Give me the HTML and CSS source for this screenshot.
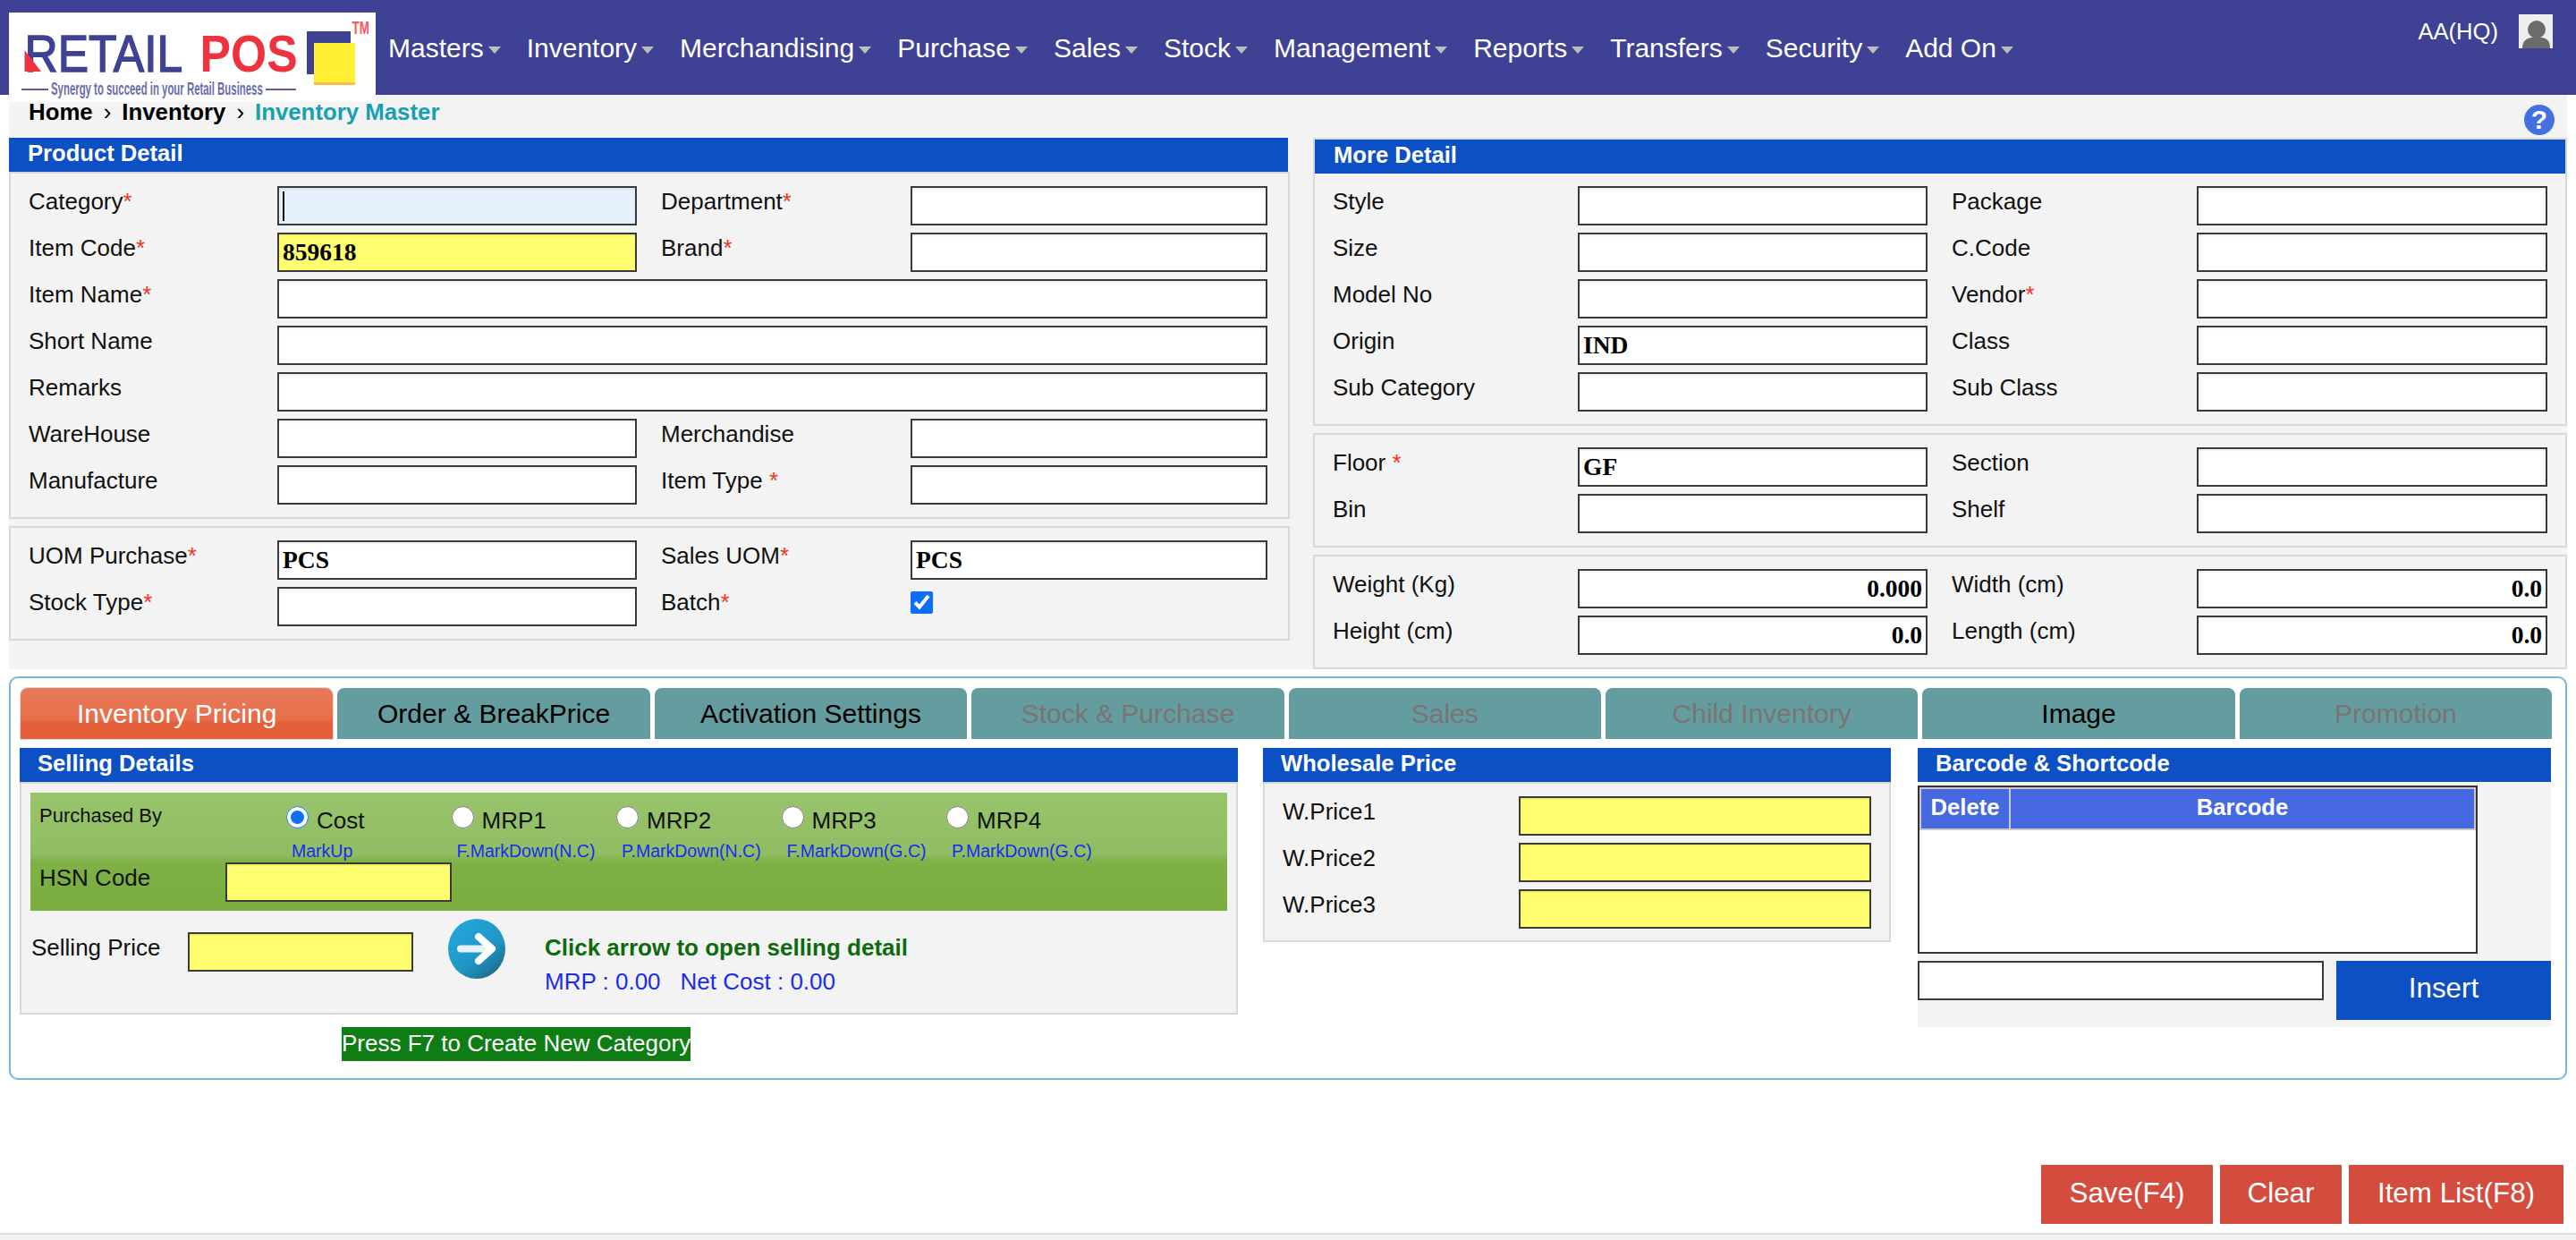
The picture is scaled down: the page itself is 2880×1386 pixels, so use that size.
FILE: index.html
```html
<!DOCTYPE html>
<html lang="en">
<head>
  <meta charset="UTF-8">
  <title>Inventory Master</title>
  <link rel="stylesheet" href="styles.css">
</head>
<body>
  <header class="topbar">
    <div class="logo">
      <svg viewBox="0 0 410 100" width="410" height="100">
        <text class="logo-word logo-word-thin" transform="translate(17.5 66) scale(0.889 1)" fill="#3f4294" stroke="#3f4294">RETAIL</text>
        <polygon points="17.5,42 36,66 17.5,66" fill="#ee3340"/>
        <text class="logo-word" transform="translate(213.6 66) scale(0.89 1)" fill="#ee3340">POS</text>
        <rect x="333" y="21" width="49" height="48" fill="#3f4294"/>
        <rect x="341" y="34" width="46" height="47" fill="#fdb94a"/>
        <rect x="341" y="34" width="46" height="44" fill="#fff033"/>
        <text class="logo-tm" transform="translate(383.5 24) scale(0.675 1)" fill="#ef5a64">TM</text>
        <line x1="14" y1="86" x2="44" y2="86" stroke="#5b5da5" stroke-width="2"/>
        <text class="logo-tag" transform="translate(47 92) scale(0.57 1)" fill="#6a6cac">Synergy to succeed in your Retail Business</text>
        <line x1="287" y1="86" x2="321" y2="86" stroke="#5b5da5" stroke-width="2"/>
      </svg>
    </div>
    <nav class="menu">
      <span class="menu-item">Masters</span>
      <span class="menu-item">Inventory</span>
      <span class="menu-item">Merchandising</span>
      <span class="menu-item">Purchase</span>
      <span class="menu-item">Sales</span>
      <span class="menu-item">Stock</span>
      <span class="menu-item">Management</span>
      <span class="menu-item">Reports</span>
      <span class="menu-item">Transfers</span>
      <span class="menu-item">Security</span>
      <span class="menu-item">Add On</span>
    </nav>
    <div class="user">
      <span class="user-name">AA(HQ)</span>
      <svg class="avatar" viewBox="0 0 38 38" width="38" height="38">
        <rect width="38" height="38" fill="#eeeeee"/>
        <g class="avatar-figure" fill="#6b6b6b">
          <circle cx="20" cy="17" r="10"/>
          <path d="M4 38 C4 30 8 27 14 26 H26 C32 27 35 30 35 38 Z"/>
        </g>
      </svg>
    </div>
  </header>

  <main class="details">
    <div class="crumb-row">
      <div class="crumbs">
        <b>Home</b><span class="crumb-sep">›</span><b>Inventory</b><span class="crumb-sep">›</span><b class="crumb-current">Inventory Master</b>
      </div>
      <span class="help">?</span>
    </div>

    <div class="detail-columns">
      <section class="col-left">
        <h2 class="section-title">Product Detail</h2>
        <div class="panel grid-left">
          <label class="label">Category<span class="req">*</span></label>
          <input class="field field-focus" type="text">
          <label class="label label-2">Department<span class="req">*</span></label>
          <input class="field" type="text">
          <label class="label">Item Code<span class="req">*</span></label>
          <input class="field field-yellow" type="text" value="859618">
          <label class="label label-2">Brand<span class="req">*</span></label>
          <input class="field" type="text">
          <label class="label">Item Name<span class="req">*</span></label>
          <input class="field field-wide" type="text">
          <label class="label">Short Name</label>
          <input class="field field-wide" type="text">
          <label class="label">Remarks</label>
          <input class="field field-wide" type="text">
          <label class="label">WareHouse</label>
          <input class="field" type="text">
          <label class="label label-2">Merchandise</label>
          <input class="field" type="text">
          <label class="label">Manufacture</label>
          <input class="field" type="text">
          <label class="label label-2">Item Type <span class="req">*</span></label>
          <input class="field" type="text">
        </div>
        <div class="panel grid-left panel-next">
          <label class="label">UOM Purchase<span class="req">*</span></label>
          <input class="field" type="text" value="PCS">
          <label class="label label-2">Sales UOM<span class="req">*</span></label>
          <input class="field" type="text" value="PCS">
          <label class="label">Stock Type<span class="req">*</span></label>
          <input class="field" type="text">
          <label class="label label-2">Batch<span class="req">*</span></label>
          <input class="check" type="checkbox" checked>
        </div>
      </section>

      <section class="col-right">
        <div class="panel-outer">
          <h2 class="section-title">More Detail</h2>
          <div class="grid-right panel-body">
            <label class="label">Style</label>
            <input class="field" type="text">
            <label class="label label-2">Package</label>
            <input class="field" type="text">
            <label class="label">Size</label>
            <input class="field" type="text">
            <label class="label label-2">C.Code</label>
            <input class="field" type="text">
            <label class="label">Model No</label>
            <input class="field" type="text">
            <label class="label label-2">Vendor<span class="req">*</span></label>
            <input class="field" type="text">
            <label class="label">Origin</label>
            <input class="field" type="text" value="IND">
            <label class="label label-2">Class</label>
            <input class="field" type="text">
            <label class="label">Sub Category</label>
            <input class="field" type="text">
            <label class="label label-2">Sub Class</label>
            <input class="field" type="text">
          </div>
        </div>
        <div class="panel grid-right panel-next">
          <label class="label">Floor <span class="req">*</span></label>
          <input class="field" type="text" value="GF">
          <label class="label label-2">Section</label>
          <input class="field" type="text">
          <label class="label">Bin</label>
          <input class="field" type="text">
          <label class="label label-2">Shelf</label>
          <input class="field" type="text">
        </div>
        <div class="panel grid-right panel-next">
          <label class="label">Weight (Kg)</label>
          <input class="field field-num" type="text" value="0.000">
          <label class="label label-2">Width (cm)</label>
          <input class="field field-num" type="text" value="0.0">
          <label class="label">Height (cm)</label>
          <input class="field field-num" type="text" value="0.0">
          <label class="label label-2">Length (cm)</label>
          <input class="field field-num" type="text" value="0.0">
        </div>
      </section>
    </div>
  </main>

  <section class="tab-frame">
    <div class="tabs">
      <div class="tab tab-active">Inventory Pricing</div>
      <div class="tab">Order &amp; BreakPrice</div>
      <div class="tab">Activation Settings</div>
      <div class="tab tab-off">Stock &amp; Purchase</div>
      <div class="tab tab-off">Sales</div>
      <div class="tab tab-off">Child Inventory</div>
      <div class="tab">Image</div>
      <div class="tab tab-off">Promotion</div>
    </div>

    <div class="tab-body">
      <div class="selling">
        <h2 class="section-title">Selling Details</h2>
        <div class="panel selling-box">
          <div class="green">
            <div class="purchased">Purchased By</div>
            <div class="price-option">
              <div class="option-line"><input class="radio" type="radio" name="pby" checked><span>Cost</span></div>
              <div class="option-sub">MarkUp</div>
            </div>
            <div class="price-option">
              <div class="option-line"><input class="radio" type="radio" name="pby"><span>MRP1</span></div>
              <div class="option-sub">F.MarkDown(N.C)</div>
            </div>
            <div class="price-option">
              <div class="option-line"><input class="radio" type="radio" name="pby"><span>MRP2</span></div>
              <div class="option-sub">P.MarkDown(N.C)</div>
            </div>
            <div class="price-option">
              <div class="option-line"><input class="radio" type="radio" name="pby"><span>MRP3</span></div>
              <div class="option-sub">F.MarkDown(G.C)</div>
            </div>
            <div class="price-option">
              <div class="option-line"><input class="radio" type="radio" name="pby"><span>MRP4</span></div>
              <div class="option-sub">P.MarkDown(G.C)</div>
            </div>
            <div class="hsn">
              <label class="label hsn-label">HSN Code</label>
              <input class="field field-yellow hsn-input" type="text">
            </div>
          </div>
          <div class="price-row">
            <label class="label price-label">Selling Price</label>
            <input class="field field-yellow price-input" type="text">
            <svg class="go-arrow" viewBox="0 0 66 67" width="66" height="67">
              <defs>
                <linearGradient id="arrowFill" x1="0.2" y1="0.1" x2="0.85" y2="0.95">
                  <stop offset="0" stop-color="#22a6da"/>
                  <stop offset="0.6" stop-color="#2095c4"/>
                  <stop offset="1" stop-color="#1a6a86"/>
                </linearGradient>
              </defs>
              <ellipse cx="33" cy="33.5" rx="32" ry="33.5" fill="url(#arrowFill)"/>
              <path d="M15 33.5 H44" stroke="#e4f3f8" stroke-width="8" stroke-linecap="round" fill="none"/>
              <path d="M35 20 L50 33.5 L35 47" stroke="#ffffff" stroke-width="8" stroke-linecap="round" stroke-linejoin="round" fill="none"/>
            </svg>
            <div class="price-info">
              <div class="price-hint">Click arrow to open selling detail</div>
              <div class="price-totals"><span>MRP : 0.00</span><span>Net Cost : 0.00</span></div>
            </div>
          </div>
        </div>
        <div class="f7-note">Press F7 to Create New Category</div>
      </div>

      <div class="wholesale">
        <h2 class="section-title">Wholesale Price</h2>
        <div class="panel wholesale-grid">
          <label class="label">W.Price1</label>
          <input class="field field-yellow" type="text">
          <label class="label">W.Price2</label>
          <input class="field field-yellow" type="text">
          <label class="label">W.Price3</label>
          <input class="field field-yellow" type="text">
        </div>
      </div>

      <div class="barcode">
        <h2 class="section-title">Barcode &amp; Shortcode</h2>
        <div class="barcode-box">
          <div class="barcode-table">
            <table>
              <thead>
                <tr><th class="th-delete">Delete</th><th>Barcode</th></tr>
              </thead>
            </table>
          </div>
          <div class="barcode-add">
            <input class="field barcode-input" type="text">
            <button class="insert-btn">Insert</button>
          </div>
        </div>
      </div>
    </div>
  </section>

  <div class="actions">
    <button class="action-btn action-save">Save(F4)</button>
    <button class="action-btn action-clear">Clear</button>
    <button class="action-btn action-list">Item List(F8)</button>
  </div>
  <footer class="footer"></footer>
</body>
</html>
```

FILE: styles.css
```css
html, body {
  margin: 0;
  padding: 0;
  overflow: hidden;
}

body {
  font-family: "Liberation Sans", Arial, sans-serif;
  font-size: 26px;
  color: #111;
  background-color: #fff;
  height: 1386px;
}

/* top bar */
.topbar {
  display: flex;
  align-items: flex-start;
  height: 106px;
  background-color: #3f4294;
  color: #fff;
}

.logo {
  position: relative;
  z-index: 2;
  width: 410px;
  height: 100px;
  margin: 14px 14px 0 10px;
  background-color: #fff;
  flex: none;
}

.logo svg {
  display: block;
}

.logo-word {
  font-family: "Liberation Sans", sans-serif;
  font-weight: bold;
  font-size: 58px;
}

.logo-word-thin {
  font-weight: normal;
  stroke-width: 1.5px;
}

.logo-tm {
  font-family: "Liberation Sans", sans-serif;
  font-weight: bold;
  font-size: 20px;
}

.logo-tag {
  font-family: "Liberation Sans", sans-serif;
  font-weight: bold;
  font-size: 20px;
}

.menu {
  display: flex;
  gap: 29px;
  margin-top: 36px;
  font-size: 30px;
  line-height: 36px;
}

.menu-item {
  display: flex;
  align-items: center;
}

.menu-item::after {
  content: "";
  margin: 4px 0 0 5px;
  border-left: 7.5px solid transparent;
  border-right: 7.5px solid transparent;
  border-top: 8px solid #bdbdbd;
}

.user {
  display: flex;
  gap: 23px;
  margin: 16px 26px 0 auto;
}

.user-name {
  font-size: 25.6px;
  line-height: 38px;
}

.avatar {
  display: block;
}

.avatar-figure {
  filter: blur(0.7px);
}

/* upper form area */
.details {
  margin: 0 10px;
  height: 642px;
  background-color: #f3f3f3;
}

.crumb-row {
  display: flex;
  justify-content: space-between;
  height: 48px;
}

.crumbs {
  padding-left: 22px;
  font-size: 25.8px;
  line-height: 38px;
  color: #000;
}

.crumb-sep {
  margin: 0 12px;
}

.crumb-current {
  color: #18a0b0;
}

.help {
  width: 34px;
  height: 34px;
  margin: 11px 14px 0 0;
  border-radius: 50%;
  background-color: #4570e0;
  color: #fff;
  font-weight: bold;
  font-size: 30px;
  line-height: 34px;
  text-align: center;
}

.detail-columns {
  display: flex;
  gap: 26px;
}

.col-left {
  width: 1432px;
}

.col-right {
  width: 1402px;
}

.section-title {
  margin: 0;
  height: 38px;
  padding-left: 21px;
  background-color: #0d50c4;
  color: #fff;
  font-size: 25.6px;
  font-weight: bold;
  line-height: 34px;
}

.panel {
  background-color: #f3f3f3;
  border: 2px solid #d8d8d8;
  padding: 14px 20px;
}

.panel-next {
  margin-top: 8px;
}

.panel-outer {
  border: 2px solid #d8d8d8;
}

.panel-body {
  padding: 14px 20px;
}

.grid-left,
.grid-right {
  display: grid;
  row-gap: 8px;
  grid-auto-rows: 44px;
}

.grid-left {
  grid-template-columns: 278px 402px 306px 399px;
  padding-right: 23px;
}

.grid-right {
  grid-template-columns: 274px 391px 301px 392px;
}

.col-left .section-title {
  margin-right: 2px;
}

.label {
  line-height: 34px;
  white-space: nowrap;
}

.label-2 {
  padding-left: 27px;
}

.req {
  color: #f5321e;
}

.field {
  box-sizing: border-box;
  display: block;
  width: 100%;
  height: 44px;
  margin: 0;
  padding: 0 4px;
  border: 2px solid #3a3a3a;
  border-radius: 0;
  outline: none;
  background-color: #fff;
  box-shadow: inset 0 2px 2px rgba(0, 0, 0, 0.06);
  font-family: "Liberation Serif", "Times New Roman", serif;
  font-weight: bold;
  font-size: 27.5px;
  color: #000;
}

.field-wide {
  grid-column: 2 / 5;
}

.field-yellow {
  background-color: #ffff70;
}

.field-focus {
  background: linear-gradient(#000, #000) 4px center / 2px 33px no-repeat, #e6f1fd;
}

.field-num {
  text-align: right;
}

.check {
  justify-self: start;
  width: 25px;
  height: 25px;
  margin: 5px 0 0;
  accent-color: #0d6efd;
}

/* tab frame */
.tab-frame {
  height: 451px;
  box-sizing: border-box;
  margin: 8px 10px 0;
  padding: 11px 10px 0;
  border: 2px solid #74b9d8;
  border-radius: 10px;
}

.tabs {
  display: grid;
  grid-template-columns: repeat(8, 349.4px);
  column-gap: 5px;
  margin-left: 1px;
}

.tab {
  height: 57px;
  background-color: #639d9f;
  border-radius: 8px 8px 0 0;
  font-size: 30px;
  line-height: 57px;
  text-align: center;
  color: #000;
}

.tab-active {
  background: linear-gradient(#e97b59 0%, #e76f4b 62%, #e3603a 68%, #e35e38 100%);
  box-shadow: 0 0 0 1px #ddd;
  color: #fff;
}

.tab-off {
  color: #7a7474;
}

.tab-body {
  display: flex;
  margin-top: 10px;
}

.selling {
  width: 1362px;
  flex: none;
}

.selling .section-title,
.wholesale .section-title,
.barcode .section-title {
  padding-left: 20px;
}

.selling-box {
  height: 236px;
  padding: 10px;
}

.green {
  display: grid;
  grid-template-columns: 276px repeat(5, 184.5px);
  grid-template-rows: 63px 44px;
  height: 107px;
  padding: 15px 0 10px 10px;
  background: linear-gradient(#98c46c 0%, #90bd63 52%, #7fb146 58%, #79ad3f 100%);
}

.purchased {
  font-size: 22px;
  line-height: 21px;
  color: #111;
}

.option-line {
  display: flex;
  align-items: flex-start;
  gap: 9px;
  height: 36px;
}

.option-line span {
  line-height: 32px;
}

.radio {
  width: 25px;
  height: 25px;
  margin: 0;
  accent-color: #0d6efd;
}

.option-sub {
  margin-left: 6px;
  font-size: 19.5px;
  line-height: 28px;
  color: #1a2cf0;
  white-space: nowrap;
}

.hsn {
  display: flex;
  grid-column: 1 / -1;
}

.hsn-label {
  width: 208px;
  flex: none;
}

.hsn-input {
  width: 253px;
}

.price-row {
  display: flex;
  align-items: flex-start;
  margin-top: 8px;
  padding-left: 1px;
}

.price-label {
  width: 175px;
  margin-top: 16px;
  flex: none;
}

.price-input {
  width: 252px;
  margin-top: 16px;
  flex: none;
}

.go-arrow {
  margin: 1px 0 0 38px;
  flex: none;
}

.price-info {
  margin: 16px 0 0 43px;
  line-height: 34px;
}

.price-hint {
  font-weight: bold;
  color: #0e6a0e;
}

.price-totals {
  display: flex;
  gap: 22px;
  margin-top: 4px;
  color: #1a2cf0;
}

.f7-note {
  width: 390px;
  height: 38px;
  margin: 14px 0 0 360px;
  background-color: #0d7d14;
  color: #fff;
  line-height: 36px;
  white-space: nowrap;
}

.wholesale {
  width: 702px;
  margin-left: 28px;
  flex: none;
}

.wholesale-grid {
  display: grid;
  grid-template-columns: 264px 394px;
  grid-auto-rows: 44px;
  row-gap: 8px;
  padding-bottom: 13px;
}

.barcode {
  width: 708px;
  margin-left: 30px;
  flex: none;
}

.barcode-box {
  padding: 4px 0 8px;
  background-color: #f3f3f3;
}

.barcode-table {
  box-sizing: border-box;
  width: 626px;
  height: 188px;
  border: 2px solid #333;
  background-color: #fff;
}

.barcode-table table {
  width: 100%;
  border-spacing: 0;
}

.barcode-table th {
  box-sizing: border-box;
  height: 48px;
  padding: 0 0 3px;
  background-color: #4668e0;
  border: 2px solid #c8c8c8;
  color: #fff;
  font-size: 25.6px;
  font-weight: bold;
  text-align: center;
}

.barcode-table th + th {
  border-left: 0;
}

.th-delete {
  width: 102px;
}

.barcode-add {
  display: flex;
  align-items: flex-start;
  justify-content: space-between;
  margin-top: 8px;
}

.barcode-input {
  width: 454px;
}

.insert-btn {
  width: 240px;
  height: 66px;
  padding: 0 0 4px;
  border: none;
  background-color: #0d50c4;
  color: #fff;
  font-family: inherit;
  font-size: 31.4px;
}

/* bottom */
.actions {
  display: flex;
  justify-content: flex-end;
  gap: 8px;
  margin-top: 95px;
  padding-right: 14px;
}

.action-btn {
  height: 66px;
  padding: 0 0 3px;
  border: none;
  background-color: #d44c3e;
  color: #fff;
  font-family: inherit;
  font-size: 31.4px;
}

.action-save {
  width: 192px;
}

.action-clear {
  width: 136px;
}

.action-list {
  width: 240px;
}

.footer {
  height: 6px;
  margin-top: 10px;
  border-top: 2px solid #ddd;
  background-color: #f3f3f3;
}
```
